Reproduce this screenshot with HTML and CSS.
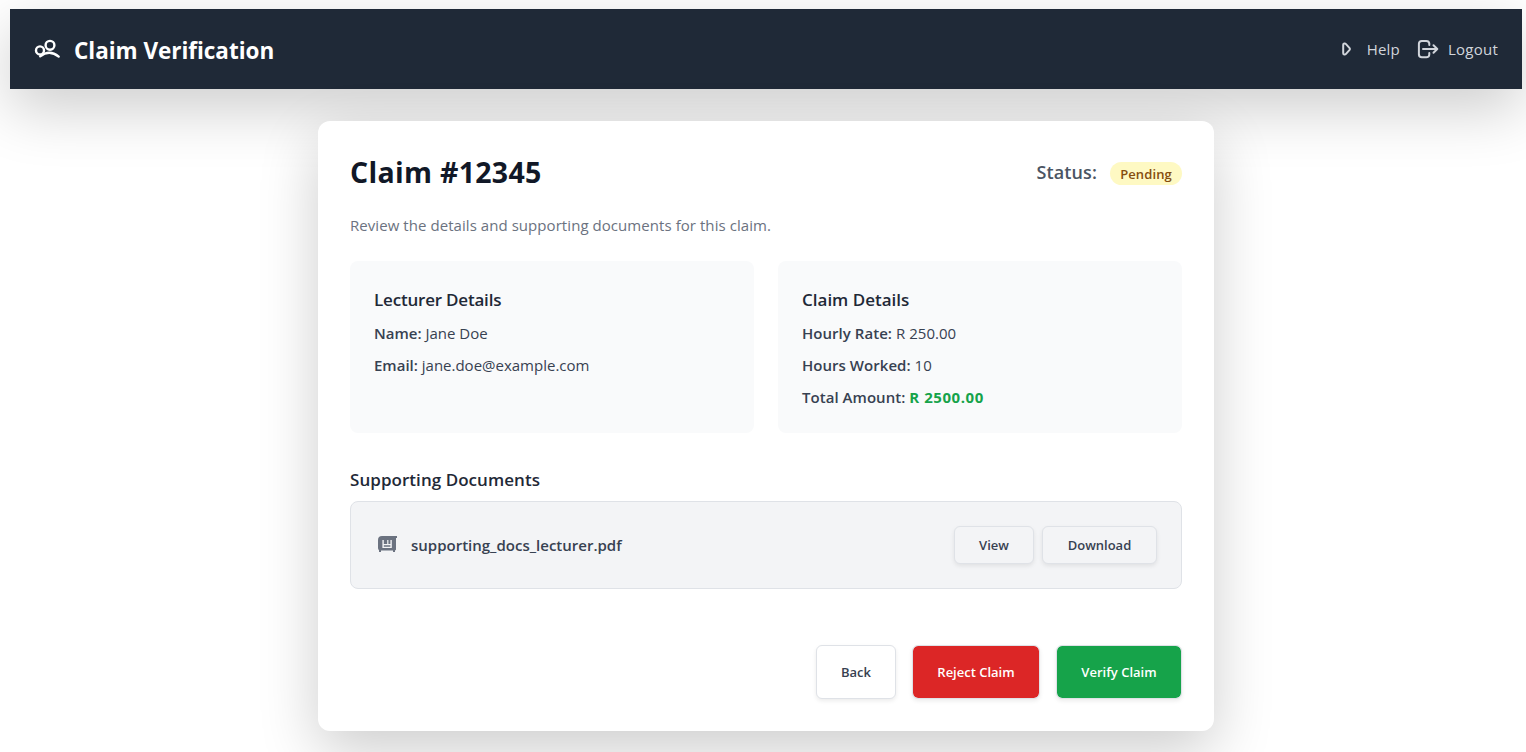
FILE: index.html
```html
<!DOCTYPE html>
<html lang="en">
<head>
<meta charset="utf-8">
<title>Claim Verification</title>
<link rel="stylesheet" href="styles.css">
</head>
<body>
<header class="topbar">
  <div class="brand">
    <svg class="brand-icon" width="28" height="24" viewBox="0 0 28 24" fill="none" stroke="currentColor" stroke-width="2.4" stroke-linecap="round">
      <circle cx="6" cy="13.4" r="4"/>
      <circle cx="16" cy="8.3" r="4.4"/>
      <path d="M6.2 19.3C12 14.8 18.5 14.5 24.7 19.6"/>
    </svg>
    <h1 class="brand-name">Claim Verification</h1>
  </div>
  <nav class="nav">
    <a class="nav-link help"><svg width="24" height="24" viewBox="0 0 24 24" fill="none" stroke="currentColor" stroke-width="2" stroke-linejoin="round"><path d="M8.2 7.8C8.2 6.4 10 6 11 7.1L14.6 11.1Q15.3 12 14.6 12.9L11 16.9C10 18 8.2 17.6 8.2 16.2Z"/></svg><span>Help</span></a>
    <a class="nav-link logout"><svg width="24" height="24" viewBox="0 0 24 24" fill="none" stroke="currentColor" stroke-width="2" stroke-linecap="round" stroke-linejoin="round"><path d="M13.3 8V6.5A3 3 0 0 0 10.3 3.9H5.8A3 3 0 0 0 2.9 6.8V17.4A3 3 0 0 0 5.8 20.3H10.3A3 3 0 0 0 13.3 17.5V16M7 12H21M17.5 8.3L21.3 12L17.5 15.7"/></svg><span>Logout</span></a>
  </nav>
</header>
<main class="card">
  <div class="card-head">
    <h2 class="claim-title">Claim #12345</h2>
    <div class="status"><span class="status-label">Status:</span><span class="badge">Pending</span></div>
  </div>
  <p class="intro">Review the details and supporting documents for this claim.</p>
  <div class="panels">
    <section class="panel">
      <h3 class="heading lecturer">Lecturer Details</h3>
      <p class="row"><strong>Name:</strong> Jane Doe</p>
      <p class="row"><strong>Email:</strong> jane.doe@example.com</p>
    </section>
    <section class="panel">
      <h3 class="heading">Claim Details</h3>
      <p class="row claim-row"><strong>Hourly Rate:</strong> R 250.00</p>
      <p class="row claim-row"><strong>Hours Worked:</strong> 10</p>
      <p class="row claim-row"><strong>Total Amount:</strong> <span class="total">R 2500.00</span></p>
    </section>
  </div>
  <h3 class="heading docs-heading">Supporting Documents</h3>
  <div class="doc">
    <svg class="doc-icon" width="24" height="24" viewBox="0 0 24 24"><path fill="currentColor" fill-rule="evenodd" d="M7 3H22V5H21V16.5Q21 17.2 20 17.4V19H18V17.6H6V19H4V17.2Q3 16.5 3 15V7Q3 3 7 3ZM7.4 7V15H16.8V7H15.4V11H13.4V7H12.2V11H8.8V7ZM8.8 12.2H15.4V13.8H8.8Z"/></svg>
    <span class="doc-name">supporting_docs_lecturer.pdf</span>
    <button class="btn small view">View</button>
    <button class="btn small download">Download</button>
  </div>
  <div class="actions">
    <button class="btn back">Back</button>
    <button class="btn solid reject">Reject Claim</button>
    <button class="btn solid verify">Verify Claim</button>
  </div>
</main>
</body>
</html>
```

FILE: styles.css
```css
* { box-sizing: border-box; }
html { background: #fff; overflow: hidden; }
body {
  margin: 0;
  padding: 9px 4px 0 10px;
  height: 752px;
  overflow: hidden;
  font: 15px/24px "Segoe UI", "Open Sans", "Noto Sans", sans-serif;
  color: #374151;
}
h1, h2, h3, p { margin: 0; }
svg { display: block; flex: none; }
.topbar {
  display: flex;
  align-items: center;
  justify-content: space-between;
  height: 80px;
  padding: 0 24px;
  background: #1f2937;
  color: #fff;
  box-shadow: 0 20px 60px rgba(0, 0, 0, .2);
}
.brand { display: flex; align-items: center; gap: 12px; }
.brand-name { font-size: 22.5px; line-height: 32px; font-weight: 700; letter-spacing: -.03px; padding-top: 4px; }
.nav { display: flex; gap: 16px; color: #d1d5db; }
.nav-link { display: flex; align-items: center; gap: 8px; letter-spacing: .2px; }
.logout { letter-spacing: .25px; }
.card {
  width: 896px;
  height: 610px;
  margin: 32px auto 0;
  padding: 32px;
  border-radius: 12px;
  background: #fff;
  box-shadow: 0 20px 60px rgba(0, 0, 0, .2);
}
.card-head { display: flex; justify-content: space-between; align-items: center; height: 36px; margin-bottom: 24px; }
.claim-title { font-size: 28.5px; line-height: 36px; font-weight: 700; letter-spacing: .3px; color: #111827; padding-top: 2px; }
.status { display: flex; align-items: center; gap: 13px; }
.status-label { font-size: 18px; line-height: 28px; font-weight: 600; letter-spacing: .1px; color: #4b5563; padding-top: 1px; }
.badge {
  width: 72px; height: 23px; margin-top: 4px;
  border-radius: 12px;
  background: #fef9c3; color: #854d0e;
  font-size: 13px; line-height: 24px; font-weight: 600;
  text-align: center; letter-spacing: .1px;
}
.intro { color: #6b7280; margin-bottom: 24px; letter-spacing: .06px; }
.panels { display: grid; grid-template-columns: 1fr 1fr; gap: 24px; }
.panel { height: 172px; padding: 24px; border-radius: 8px; background: #f9fafb; }
.heading { font-size: 17px; line-height: 28px; padding-top: 1px; font-weight: 600; color: #1f2937; }
.lecturer { letter-spacing: -.2px; }
.row { line-height: 24px; margin-top: 8px; }
.heading + .row { margin-top: 7px; }
.row strong { font-weight: 600; }
.claim-row { letter-spacing: .04px; }
.total { color: #16a34a; font-weight: 700; letter-spacing: .55px; }
.docs-heading { margin: 32px 0 7px; letter-spacing: .05px; }
.doc {
  display: flex; align-items: center;
  height: 88px; padding: 0 24px;
  border: 1px solid #dfe2e7; border-radius: 8px;
  background: #f3f4f6;
}
.doc-icon { color: #6b7280; }
.doc-name { flex: 1; margin-left: 12px; font-weight: 600; }
.btn {
  height: 54px; padding: 0;
  border: 1px solid #dfe2e7; border-radius: 6px;
  background: #fff; color: #374151;
  font: 600 13px/20px "Segoe UI", "Open Sans", "Noto Sans", sans-serif;
  box-shadow: 0 2px 4px rgba(0, 0, 0, .08);
}
.small { height: 38px; background: #f3f4f6; }
.view { width: 80px; margin-right: 8px; }
.download { width: 115px; }
.actions { display: flex; justify-content: flex-end; gap: 16px; margin-top: 56px; }
.back { width: 80px; }
.solid { color: #fff; background-clip: padding-box; }
.reject { width: 128px; background-color: #dc2626; }
.verify { width: 126px; background-color: #16a34a; }
```
